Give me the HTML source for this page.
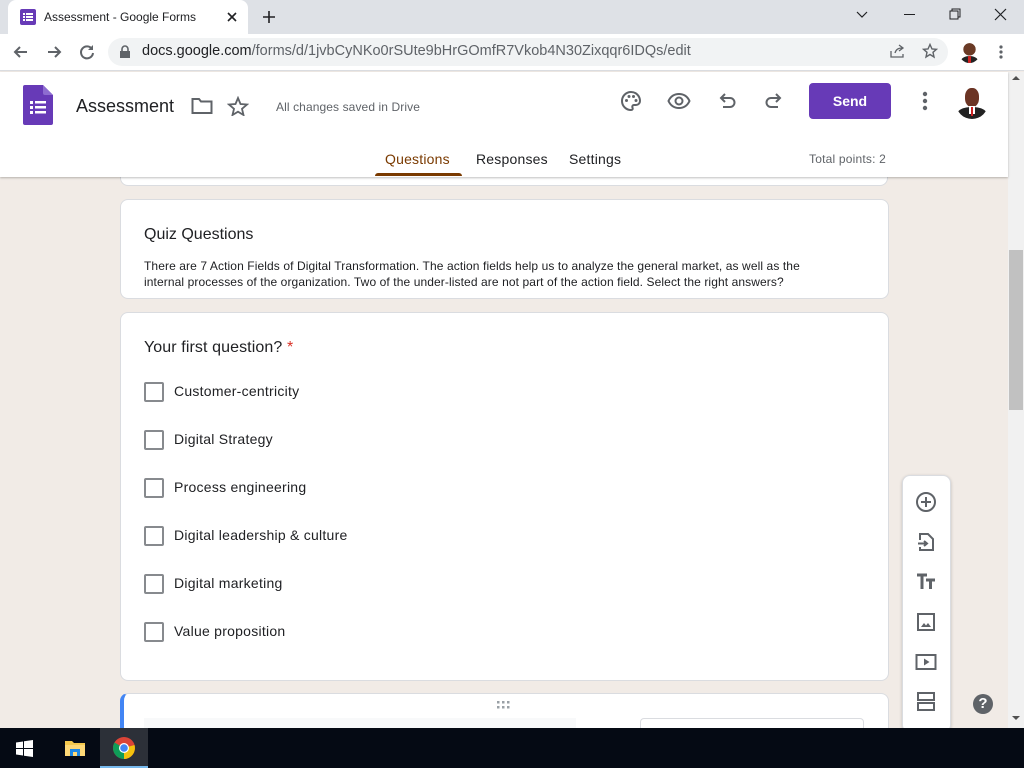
<!DOCTYPE html>
<html><head><meta charset="utf-8">
<style>
*{box-sizing:border-box;margin:0;padding:0}
body{width:1024px;height:768px;overflow:hidden;background:#f1ebe6;font-family:"Liberation Sans",Arial,sans-serif;position:relative}
.abs{position:absolute}
.tabbar{left:0;top:0;width:1024px;height:34px;background:#dee1e6}
.tab{left:8px;top:0;width:240px;height:34px;background:#fff;border-radius:8px 8px 0 0}
.addr{left:0;top:34px;width:1024px;height:37px;background:#fff;border-bottom:1px solid #dadce0}
.omni{left:108px;top:38px;width:840px;height:28px;background:#f1f3f4;border-radius:14px}
.hdr{left:0;top:72px;width:1008px;height:105px;background:#fff;box-shadow:0 1px 2px rgba(0,0,0,.25)}
.card{background:#fff;border:1px solid #dadce0;border-radius:8px}
.cb{position:absolute;left:144px;width:20px;height:20px;border:2px solid #5f6368;border-radius:2px;opacity:.75}
.opt{position:absolute;left:174px;font-size:14px;letter-spacing:.25px;color:#202124}
.tb svg{position:absolute;left:914px}
</style></head><body>
<div class="abs tabbar"></div>
<div class="abs tab"></div>
<div class="abs" style="left:20px;top:9px;width:16px;height:16px;background:#673ab7;border-radius:2px"></div>
<svg class="abs" style="left:22px;top:11px" width="12" height="12"><g fill="#fff"><rect x="1" y="2" width="2" height="2"/><rect x="4" y="2" width="7" height="2"/><rect x="1" y="5" width="2" height="2"/><rect x="4" y="5" width="7" height="2"/><rect x="1" y="8" width="2" height="2"/><rect x="4" y="8" width="7" height="2"/></g></svg>
<div class="abs" style="left:44px;top:10px;font-size:12px;color:#202124">Assessment - Google Forms</div>
<svg class="abs" style="left:226px;top:11px" width="12" height="12"><path d="M2 2L10 10M10 2L2 10" stroke="#202124" stroke-width="1.6"/></svg>
<svg class="abs" style="left:262px;top:10px" width="14" height="14"><path d="M7 1V13M1 7H13" stroke="#202124" stroke-width="1.6"/></svg>
<svg class="abs" style="left:856px;top:9px" width="12" height="10"><path d="M1 3L6 8L11 3" stroke="#202124" fill="none" stroke-width="1.2"/></svg>
<div class="abs" style="left:904px;top:14px;width:11px;height:1px;background:#202124"></div>
<svg class="abs" style="left:949px;top:8px" width="12" height="12"><rect x="1" y="3" width="8" height="8" fill="none" stroke="#202124"/><path d="M3 3V1H11V9H9" fill="none" stroke="#202124"/></svg>
<svg class="abs" style="left:994px;top:8px" width="13" height="13"><path d="M1 1L12 12M12 1L1 12" stroke="#202124" stroke-width="1.2"/></svg>

<div class="abs addr"></div>
<svg class="abs" style="left:12px;top:43px" width="18" height="18"><path d="M15 9H3M8 4L3 9L8 14" stroke="#5f6368" stroke-width="2" fill="none"/></svg>
<svg class="abs" style="left:45px;top:43px" width="18" height="18"><path d="M3 9H15M10 4L15 9L10 14" stroke="#5f6368" stroke-width="2" fill="none"/></svg>
<svg class="abs" style="left:78px;top:43px" width="18" height="18"><path d="M14 6A6 6 0 1 0 15 10" stroke="#5f6368" stroke-width="2" fill="none"/><path d="M15 2V7H10" fill="#5f6368"/></svg>
<div class="abs omni"></div>
<svg class="abs" style="left:119px;top:45px" width="12" height="14"><rect x="1" y="6" width="10" height="7" fill="#5f6368"/><path d="M3 6V4A3 3 0 0 1 9 4V6" stroke="#5f6368" stroke-width="1.6" fill="none"/></svg>
<div class="abs" style="left:142px;top:43px;font-size:14.5px;color:#202124">docs.google.com<span style="color:#5f6368">/forms/d/1jvbCyNKo0rSUte9bHrGOmfR7Vkob4N30Zixqqr6IDQs/edit</span></div>
<svg class="abs" style="left:890px;top:44px" width="16" height="14"><path d="M1 7V13H13V10M5 9C6 5 9 4 12 4M9 1L13 4L9 7" stroke="#5f6368" stroke-width="1.3" fill="none"/></svg>
<svg class="abs" style="left:922px;top:43px" width="16" height="16"><path d="M8 1.5L10 6L14.5 6.3L11 9.3L12 14L8 11.5L4 14L5 9.3L1.5 6.3L6 6Z" stroke="#5f6368" stroke-width="1.4" fill="none"/></svg>
<div class="abs" style="left:959px;top:42px;width:21px;height:21px;border-radius:50%;background:radial-gradient(circle at 50% 35%,#6a3a26 0 35%,#fff 37%);overflow:hidden"><div style="position:absolute;left:2px;top:14px;width:17px;height:10px;background:#222;border-radius:50% 50% 0 0"></div><div style="position:absolute;left:9px;top:14px;width:3px;height:7px;background:#c22"></div></div>
<svg class="abs" style="left:998px;top:44px" width="6" height="16"><circle cx="3" cy="3" r="1.6" fill="#5f6368"/><circle cx="3" cy="8" r="1.6" fill="#5f6368"/><circle cx="3" cy="13" r="1.6" fill="#5f6368"/></svg>

<div class="abs" style="left:1008px;top:72px;width:16px;height:656px;background:#f1f1f1"></div>
<div class="abs" style="left:1009px;top:250px;width:14px;height:160px;background:#c1c1c1"></div>
<svg class="abs" style="left:1011px;top:75px" width="10" height="6"><path d="M1 5L5 1L9 5Z" fill="#505050"/></svg>
<svg class="abs" style="left:1011px;top:715px" width="10" height="6"><path d="M1 1L5 5L9 1Z" fill="#505050"/></svg>

<div class="abs card" style="left:120px;top:150px;width:768px;height:36px"></div>

<div class="abs hdr"></div>
<svg class="abs" style="left:23px;top:85px" width="30" height="40"><path d="M2 0H20L30 10V38A2 2 0 0 1 28 40H2A2 2 0 0 1 0 38V2A2 2 0 0 1 2 0Z" fill="#673ab7"/><path d="M20 0L30 10H22A2 2 0 0 1 20 8Z" fill="#8d6cd0"/><g fill="#fff"><rect x="7" y="16" width="3" height="3"/><rect x="12" y="16" width="11" height="2.5"/><rect x="7" y="21" width="3" height="3"/><rect x="12" y="21" width="11" height="2.5"/><rect x="7" y="26" width="3" height="3"/><rect x="12" y="26" width="11" height="2.5"/></g></svg>
<div class="abs" style="left:76px;top:96px;font-size:18px;color:#202124">Assessment</div>
<svg class="abs" style="left:191px;top:97px" width="22" height="18"><path d="M1.5 2H8L10 4.5H20.5V16H1.5Z" stroke="#5f6368" stroke-width="2" fill="none"/></svg>
<svg class="abs" style="left:227px;top:96px" width="22" height="20"><path d="M11 2L13.5 8L20 8.5L15 12.8L16.5 19L11 15.7L5.5 19L7 12.8L2 8.5L8.5 8Z" stroke="#5f6368" stroke-width="1.8" fill="none"/></svg>
<div class="abs" style="left:276px;top:100px;font-size:12px;color:#5f6368;letter-spacing:.1px">All changes saved in Drive</div>
<svg class="abs" style="left:619px;top:89px" width="24" height="24"><path d="M12 3A9 9 0 0 0 12 21C13.5 21 14 20 13.5 18.8C13 17.5 13.5 16 15 16H17A4 4 0 0 0 21 12C21 7 17 3 12 3Z" stroke="#5f6368" stroke-width="2" fill="none"/><circle cx="7.5" cy="11.5" r="1.5" fill="#5f6368"/><circle cx="10" cy="7.5" r="1.5" fill="#5f6368"/><circle cx="14.5" cy="7.5" r="1.5" fill="#5f6368"/><circle cx="17" cy="11.5" r="1.5" fill="#5f6368"/></svg>
<svg class="abs" style="left:667px;top:90px" width="24" height="22"><path d="M1.5 11C4 5.5 8 4 12 4S20 5.5 22.5 11C20 16.5 16 18 12 18S4 16.5 1.5 11Z" stroke="#5f6368" stroke-width="2" fill="none"/><circle cx="12" cy="11" r="3.5" stroke="#5f6368" stroke-width="2" fill="none"/></svg>
<svg class="abs" style="left:717px;top:90px" width="20" height="20"><path d="M5 8H13A4.5 4.5 0 0 1 13 17H6" stroke="#5f6368" stroke-width="2" fill="none"/><path d="M8 4L4 8L8 12" stroke="#5f6368" stroke-width="2" fill="none"/></svg>
<svg class="abs" style="left:764px;top:90px" width="20" height="20"><path d="M15 8H7A4.5 4.5 0 0 0 7 17H14" stroke="#5f6368" stroke-width="2" fill="none"/><path d="M12 4L16 8L12 12" stroke="#5f6368" stroke-width="2" fill="none"/></svg>
<div class="abs" style="left:809px;top:83px;width:82px;height:36px;background:#673ab7;border-radius:4px;color:#fff;font-size:14px;font-weight:bold;text-align:center;line-height:36px">Send</div>
<svg class="abs" style="left:921px;top:91px" width="8" height="20"><circle cx="4" cy="3" r="2.2" fill="#5f6368"/><circle cx="4" cy="10" r="2.2" fill="#5f6368"/><circle cx="4" cy="17" r="2.2" fill="#5f6368"/></svg>
<div class="abs" style="left:956px;top:87px;width:32px;height:32px;border-radius:50%;overflow:hidden;background:#fff"><div style="position:absolute;left:9px;top:1px;width:14px;height:19px;border-radius:45%;background:#6b3424"></div><div style="position:absolute;left:1px;top:20px;width:30px;height:14px;background:#222;border-radius:50% 50% 0 0"></div><div style="position:absolute;left:13px;top:19px;width:6px;height:8px;background:#fff"></div><div style="position:absolute;left:15px;top:20px;width:2px;height:9px;background:#c22"></div></div>

<div class="abs" style="left:385px;top:151px;font-size:14px;color:#7a3a00;letter-spacing:.2px">Questions</div>
<div class="abs" style="left:375px;top:173px;width:87px;height:3px;background:#7a3a00;border-radius:3px 3px 0 0"></div>
<div class="abs" style="left:476px;top:151px;font-size:14px;color:#202124;letter-spacing:.2px">Responses</div>
<div class="abs" style="left:569px;top:151px;font-size:14px;color:#202124;letter-spacing:.2px">Settings</div>
<div class="abs" style="left:809px;top:152px;font-size:12px;color:#5f6368;letter-spacing:.2px">Total points: 2</div>

<div class="abs card" style="left:120px;top:199px;width:769px;height:100px"></div>
<div class="abs" style="left:144px;top:226px;font-size:16px;color:#202124">Quiz Questions</div>
<div class="abs" style="left:144px;top:258px;width:690px;font-size:12px;line-height:16px;letter-spacing:.1px;color:#202124">There are 7 Action Fields of Digital Transformation. The action fields help us to analyze the general market, as well as the internal processes of the organization. Two of the under-listed are not part of the action field. Select the right answers?</div>

<div class="abs card" style="left:120px;top:312px;width:769px;height:369px"></div>
<div class="abs" style="left:144px;top:339px;font-size:16px;color:#202124;letter-spacing:.1px">Your first question? <span style="color:#d93025">*</span></div>
<div class="cb" style="top:382px"></div><div class="opt" style="top:383px">Customer-centricity</div>
<div class="cb" style="top:430px"></div><div class="opt" style="top:431px">Digital Strategy</div>
<div class="cb" style="top:478px"></div><div class="opt" style="top:479px">Process engineering</div>
<div class="cb" style="top:526px"></div><div class="opt" style="top:527px">Digital leadership &amp; culture</div>
<div class="cb" style="top:574px"></div><div class="opt" style="top:575px">Digital marketing</div>
<div class="cb" style="top:622px"></div><div class="opt" style="top:623px">Value proposition</div>

<div class="abs card" style="left:120px;top:693px;width:769px;height:60px;border-left:4px solid #4285f4"></div>
<svg class="abs" style="left:497px;top:701px" width="14" height="9"><g fill="#9aa0a6"><rect x="0" y="0" width="2.5" height="2.5"/><rect x="5" y="0" width="2.5" height="2.5"/><rect x="10" y="0" width="2.5" height="2.5"/><rect x="0" y="5" width="2.5" height="2.5"/><rect x="5" y="5" width="2.5" height="2.5"/><rect x="10" y="5" width="2.5" height="2.5"/></g></svg>
<div class="abs" style="left:144px;top:718px;width:432px;height:20px;background:#f8f9fa"></div>
<div class="abs" style="left:640px;top:718px;width:224px;height:20px;border:1px solid #dadce0;border-radius:4px"></div>

<div class="abs card tb" style="left:902px;top:475px;width:49px;height:258px;box-shadow:0 1px 3px rgba(0,0,0,.2)"></div>
<div class="tb">
<svg style="top:490px" width="24" height="24"><circle cx="12" cy="12" r="9" stroke="#5f6368" stroke-width="2" fill="none"/><path d="M12 7V17M7 12H17" stroke="#5f6368" stroke-width="2"/></svg>
<svg style="top:530px" width="24" height="24"><path d="M6 10V4H14L19 9V20H6V17" stroke="#5f6368" stroke-width="2" fill="none"/><path d="M4 13.5H12M10 11L13 13.5L10 16" stroke="#5f6368" stroke-width="2" fill="none"/></svg>
<svg style="top:570px" width="24" height="24"><path d="M3 5H13M8 5V19M12 10H21M16.5 10V19" stroke="#5f6368" stroke-width="3" fill="none"/></svg>
<svg style="top:610px" width="24" height="24"><rect x="4" y="4" width="16" height="16" stroke="#5f6368" stroke-width="2" fill="none"/><path d="M7 17L10 13L12 15.5L14 13L17 17Z" fill="#5f6368"/></svg>
<svg style="top:650px" width="24" height="24"><rect x="2.5" y="5" width="19" height="14" stroke="#5f6368" stroke-width="2" fill="none"/><path d="M10 8.5V15.5L15.5 12Z" fill="#5f6368"/></svg>
<svg style="top:690px" width="24" height="24"><rect x="4" y="3" width="16" height="7" stroke="#5f6368" stroke-width="2" fill="none"/><rect x="4" y="13" width="16" height="7" stroke="#5f6368" stroke-width="2" fill="none"/></svg>
</div>
<div class="abs" style="left:973px;top:694px;width:20px;height:20px;border-radius:50%;background:#5f6368;color:#fff;font-weight:bold;font-size:15px;text-align:center;line-height:20px">?</div>

<div class="abs" style="left:0;top:728px;width:1024px;height:40px;background:#050a14"></div>
<svg class="abs" style="left:16px;top:740px" width="17" height="17"><g fill="#fff"><path d="M0 2.5L7 1.5V8H0Z"/><path d="M8 1.3L17 0V8H8Z"/><path d="M0 9H7V15.5L0 14.5Z"/><path d="M8 9H17V17L8 15.7Z"/></g></svg>
<svg class="abs" style="left:64px;top:738px" width="22" height="20"><path d="M1 3H8L10 5H21V18H1Z" fill="#f6c94d"/><rect x="1" y="7" width="20" height="11" fill="#ffd977"/><path d="M6 18V11H16V18H13V14H9V18Z" fill="#1e88e5"/></svg>
<div class="abs" style="left:100px;top:728px;width:48px;height:40px;background:#2c3038"></div>
<div class="abs" style="left:100px;top:766px;width:48px;height:2px;background:#76b9ed"></div>
<svg class="abs" style="left:112px;top:736px" width="24" height="24"><circle cx="12" cy="12" r="11" fill="#db4437"/><path d="M12 12L22.5 9A11 11 0 0 1 12 23Z" fill="#f4c20d"/><path d="M12 12L12 23A11 11 0 0 1 2.5 6.5Z" fill="#0f9d58"/><circle cx="12" cy="12" r="5" fill="#fff"/><circle cx="12" cy="12" r="3.8" fill="#4285f4"/></svg>
</body></html>
